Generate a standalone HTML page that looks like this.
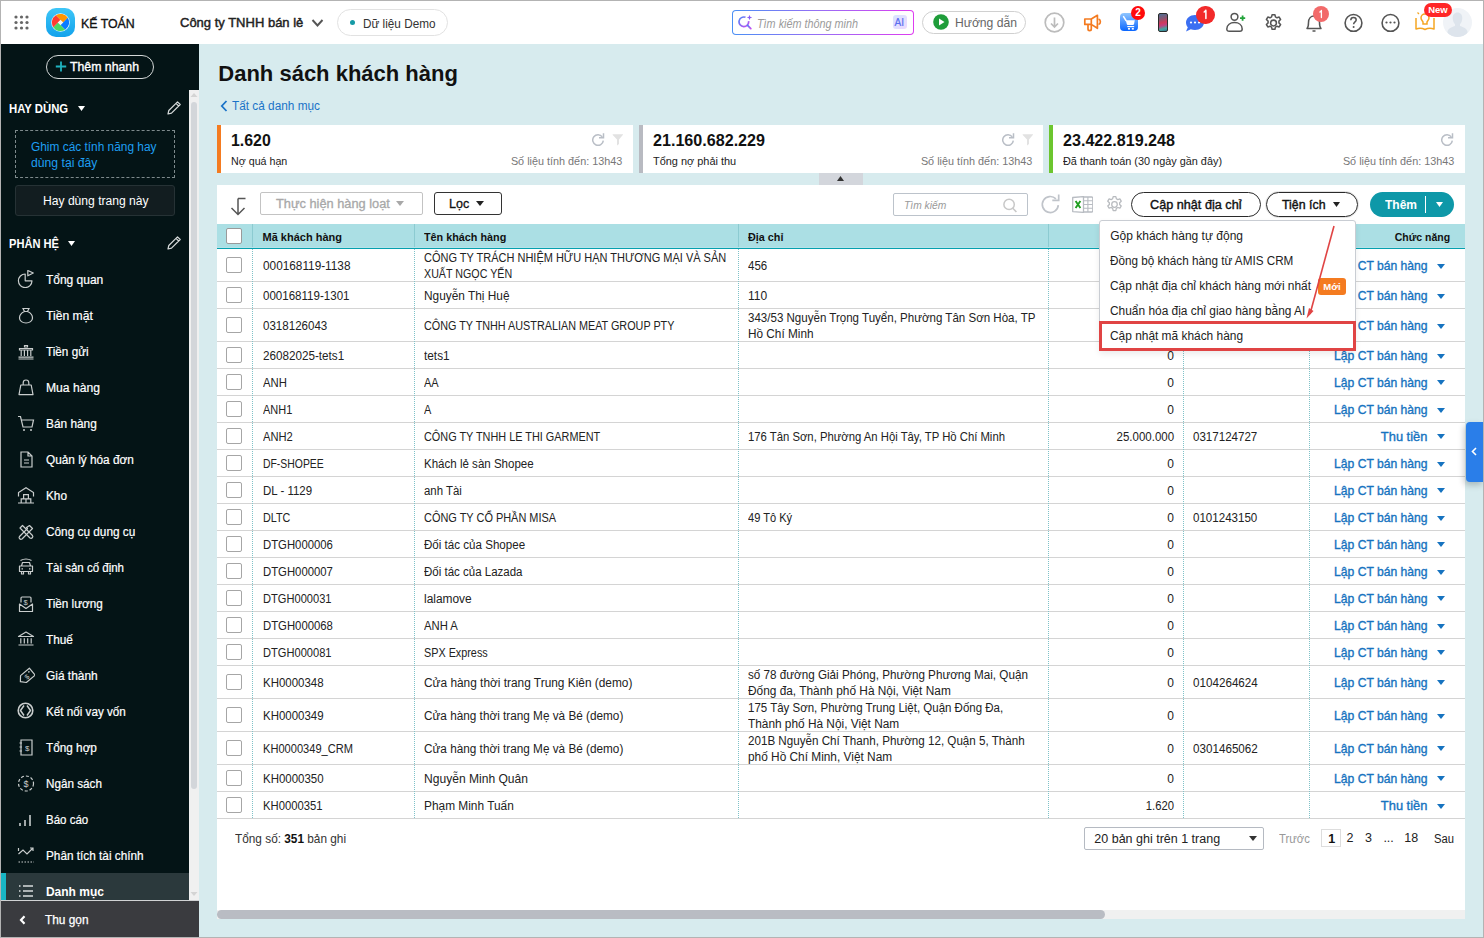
<!DOCTYPE html>
<html><head><meta charset="utf-8">
<style>
*{box-sizing:border-box;margin:0;padding:0}
html,body{width:1484px;height:938px;overflow:hidden;background:#fff}
body{font-family:"Liberation Sans",sans-serif;color:#1f1f1f;position:relative}
.abs{position:absolute}
.t{position:absolute;white-space:nowrap}
</style></head>
<body>
<div class="abs" style="left:0px;top:0px;width:1484px;height:44px;background:#fff"></div>
<svg class="abs" style="left:14px;top:15px" width="16" height="15" viewBox="0 0 16 15"><g fill="#666"><circle cx="2" cy="2" r="1.6"/><circle cx="7.5" cy="2" r="1.6"/><circle cx="13" cy="2" r="1.6"/><circle cx="2" cy="7.5" r="1.6"/><circle cx="7.5" cy="7.5" r="1.6"/><circle cx="13" cy="7.5" r="1.6"/><circle cx="2" cy="13" r="1.6"/><circle cx="7.5" cy="13" r="1.6"/><circle cx="13" cy="13" r="1.6"/></g></svg>
<div class="abs" style="left:46px;top:8px;width:29px;height:29px;border-radius:10px;background:linear-gradient(180deg,#3ec6f7,#12a2ec)"></div>
<svg class="abs" style="left:51px;top:13px" width="19" height="19" viewBox="0 0 19 19"><circle cx="9.5" cy="9.5" r="9.3" fill="#e8f6fd"/><path d="M4.859 2.259 A8.6 8.6 0 0 1 16.741 4.859 L12.1 9.5 L9.5 6.9 Z" fill="#ff9500"/><path d="M16.741 4.859 A8.6 8.6 0 0 1 14.141 16.741 L9.5 12.1 L12.1 9.5 Z" fill="#0a7bff"/><path d="M14.141 16.741 A8.6 8.6 0 0 1 2.259 14.141 L6.9 9.5 L9.5 12.1 Z" fill="#4cd964"/><path d="M2.259 14.141 A8.6 8.6 0 0 1 4.859 2.259 L9.5 6.9 L6.9 9.5 Z" fill="#ff3b30"/><path d="M9.5 6.9 L12.1 9.5 L9.5 12.1 L6.9 9.5Z" fill="#f2f4f7"/></svg>
<div class="t" style="left:81px;top:18.02px;font-size:12.5px;line-height:12.5px;color:#111;-webkit-text-stroke:0.35px #111;transform:scaleX(0.9882);transform-origin:left 50%">KẾ TOÁN</div>
<div class="t" style="left:180px;top:16.00px;font-size:13px;line-height:13px;color:#222;-webkit-text-stroke:0.45px #222">Công ty TNHH bán lẻ</div>
<svg class="abs" style="left:311px;top:18px" width="13" height="10" viewBox="0 0 13 10"><path d="M1.5 2 L6.5 7.5 L11.5 2" stroke="#555" stroke-width="1.9" fill="none"/></svg>
<div class="abs" style="left:337px;top:9px;width:111px;height:27px;border:1px solid #e2e2e2;border-radius:14px"></div>
<div class="abs" style="left:350px;top:20px;width:5px;height:5px;border-radius:50%;background:#159aa6"></div>
<div class="t" style="left:363px;top:17.84px;font-size:12px;line-height:12px;color:#333;transform:scaleX(0.9790);transform-origin:left 50%">Dữ liệu Demo</div>
<div class="abs" style="left:732px;top:10px;width:182px;height:25px;border-radius:4px;padding:1px;background:linear-gradient(90deg,#4a90f5,#9b6cf5,#de3cf0)"><div style="width:100%;height:100%;background:#fff;border-radius:3px"></div></div>
<svg class="abs" style="left:738px;top:14px" width="15" height="16" viewBox="0 0 15 16"><defs><linearGradient id="sg" x1="0" y1="0" x2="1" y2="1"><stop offset="0" stop-color="#4f86f7"/><stop offset="1" stop-color="#c74ff0"/></linearGradient></defs><path d="M10.6 7.2 A4.8 4.8 0 1 1 7.5 3.3" stroke="url(#sg)" stroke-width="1.7" fill="none"/><path d="M9.6 11.3 L12.8 14.6" stroke="url(#sg)" stroke-width="1.8" stroke-linecap="round"/><path d="M11.5 0.8 L12.2 2.8 L14.2 3.5 L12.2 4.2 L11.5 6.2 L10.8 4.2 L8.8 3.5 L10.8 2.8Z" fill="#8a5cf5"/></svg>
<div class="t" style="left:757px;top:17.54px;font-size:12px;line-height:12px;color:#9a9a9a;font-style:italic;transform:scaleX(0.9015);transform-origin:left 50%">Tìm kiếm thông minh</div>
<div class="abs" style="left:893px;top:15px;width:14px;height:14px;border-radius:3px;background:linear-gradient(135deg,#d9e6ff,#ecd9ff)"></div>
<div class="t" style="left:894.5px;top:17.54px;font-size:10px;line-height:10px;color:#5b6ef0;-webkit-text-stroke:0.2px #5b6ef0">AI</div>
<div class="abs" style="left:922px;top:11px;width:104px;height:23px;border:1px solid #d0d0d0;border-radius:12px"></div>
<svg class="abs" style="left:933px;top:14px" width="16" height="16" viewBox="0 0 16 16"><circle cx="8" cy="8" r="7.8" fill="#1f9d3a"/><path d="M6 4.5 L11.5 8 L6 11.5Z" fill="#fff"/></svg>
<div class="t" style="left:955px;top:15.90px;font-size:13px;line-height:13px;color:#666;transform:scaleX(0.9341);transform-origin:left 50%">Hướng dẫn</div>
<svg class="abs" style="left:1044px;top:12px" width="21" height="21" viewBox="0 0 21 21"><circle cx="10.5" cy="10.5" r="9.3" stroke="#bcbcbc" stroke-width="1.7" fill="none"/><path d="M10.5 5.5 V15 M7 11.5 L10.5 15 L14 11.5" stroke="#bcbcbc" stroke-width="1.7" fill="none"/></svg>
<svg class="abs" style="left:1080px;top:10px" width="26" height="25" viewBox="0 0 26 25"><path d="M4.8 9 H11.3 L17.4 5.3 V18.3 L11.3 14.4 H4.8Z M11.3 9 V14.4 M8 14.6 V19 A1.65 1.65 0 0 0 11.3 19 V14.6 M18.6 9.2 A2.2 2.7 0 0 1 18.6 14.5" stroke="#f47b20" stroke-width="1.7" fill="none" stroke-linejoin="round"/></svg>
<div class="abs" style="left:1120px;top:13px;width:18px;height:18px;border-radius:4px;background:linear-gradient(180deg,#90c6ff,#0a66ff)"></div>
<svg class="abs" style="left:1120px;top:13px" width="18" height="18" viewBox="0 0 18 18"><path d="M3.6 3.6 L6 7.5" stroke="#fff" stroke-width="1.5" stroke-linecap="round"/><path d="M5.8 7.3 H14.8 L14 11.2 Q13.6 12 12.8 12 H7.8 Q7 12 6.8 11.3Z" fill="#fff"/><path d="M7.3 13.6 H14.2" stroke="#fff" stroke-width="1.2"/><rect x="8" y="15" width="2" height="1.6" fill="#fff"/><rect x="11.8" y="15" width="2" height="1.6" fill="#fff"/></svg>
<div class="abs" style="left:1131px;top:6px;width:14px;height:14px;border-radius:50%;background:#ff0a0a;color:#fff;font-size:10px;font-weight:bold;text-align:center;line-height:14px">2</div>
<div class="abs" style="left:1158px;top:13px;width:10px;height:19px;border-radius:2px;background:linear-gradient(165deg,#4a6f95 0%,#8a5570 30%,#d03a5a 50%,#c04080 65%,#40a8a0 85%,#3a7090 100%);border:1px solid #2a2a2a"></div>
<svg class="abs" style="left:1185px;top:14px" width="20" height="18" viewBox="0 0 20 18"><path d="M10 1 C15 1 19 4.5 19 8.5 C19 12.5 15 16 10 16 C8.5 16 7 15.7 5.8 15.2 L1 17.5 L2.8 13.2 C1.6 11.9 1 10.3 1 8.5 C1 4.5 5 1 10 1Z" fill="#3b6ff2"/><circle cx="6" cy="8.5" r="1.1" fill="#fff"/><circle cx="10" cy="8.5" r="1.1" fill="#fff"/><circle cx="14" cy="8.5" r="1.1" fill="#fff"/></svg>
<div class="abs" style="left:1196px;top:5.5px;width:19px;height:18px;border-radius:9px;background:#f22a2a"></div>
<svg class="abs" style="left:1196px;top:5px" width="19" height="19" viewBox="0 0 19 19"><path d="M9.9 5.2 V13.5 M9.9 5.4 L8.2 7" stroke="#fff" stroke-width="1.5" fill="none" stroke-linecap="round"/></svg>
<svg class="abs" style="left:1225px;top:12px" width="22" height="21" viewBox="0 0 22 21"><circle cx="9.5" cy="4.8" r="3.4" stroke="#555" stroke-width="1.5" fill="none"/><path d="M1.8 17 C1.8 12.8 5.2 10.6 9.5 10.6 C13.8 10.6 17.2 12.8 17.2 17 C17.2 18.6 16.2 19.3 14.8 19.3 H4.2 C2.8 19.3 1.8 18.6 1.8 17Z" stroke="#555" stroke-width="1.5" fill="none"/><path d="M17.6 3.5 V8.7 M15 6.1 H20.2" stroke="#22a33a" stroke-width="1.8"/></svg>
<svg class="abs" style="left:1263px;top:13px" width="21" height="20" viewBox="0 0 24 24"><path d="M12 8.5a3.5 3.5 0 1 0 0 7a3.5 3.5 0 1 0 0-7z" stroke="#555" stroke-width="1.9" fill="none"/><path d="M10.3 2h3.4l.6 2.7 1.9 1.1 2.6-.9 1.7 2.9-2 1.9v2.2l2 1.9-1.7 2.9-2.6-.9-1.9 1.1-.6 2.7h-3.4l-.6-2.7-1.9-1.1-2.6.9-1.7-2.9 2-1.9v-2.2l-2-1.9 1.7-2.9 2.6.9 1.9-1.1z" stroke="#555" stroke-width="1.8" fill="none" stroke-linejoin="round"/></svg>
<svg class="abs" style="left:1304px;top:13px" width="20" height="20" viewBox="0 0 20 20"><path d="M3 15.5 C4.5 14 4.5 12.5 4.5 9.5 C4.5 5.5 7 3 10 3 C13 3 15.5 5.5 15.5 9.5 C15.5 12.5 15.5 14 17 15.5Z" stroke="#555" stroke-width="1.5" fill="none" stroke-linejoin="round"/><path d="M8.5 18 H11.5" stroke="#555" stroke-width="1.5"/></svg>
<div class="abs" style="left:1313px;top:6px;width:16px;height:16px;border-radius:50%;background:#f26a6a"></div>
<svg class="abs" style="left:1313px;top:6px" width="16" height="16" viewBox="0 0 16 16"><path d="M8.4 4.5 V11.5 M8.4 4.7 L6.9 6.1" stroke="#fff" stroke-width="1.3" fill="none" stroke-linecap="round"/></svg>
<svg class="abs" style="left:1343px;top:12px" width="21" height="21" viewBox="0 0 21 21"><circle cx="10.5" cy="10.9" r="8.4" stroke="#555" stroke-width="1.6" fill="none"/><path d="M7.8 8.2 C7.8 6.5 9 5.6 10.5 5.6 C12 5.6 13.2 6.6 13.2 8 C13.2 9.8 10.6 10 10.6 12.2" stroke="#555" stroke-width="1.5" fill="none"/><circle cx="10.6" cy="15" r="1" fill="#555"/></svg>
<svg class="abs" style="left:1380px;top:12px" width="21" height="21" viewBox="0 0 21 21"><circle cx="10.5" cy="10.9" r="8.4" stroke="#555" stroke-width="1.6" fill="none"/><circle cx="6.5" cy="10.5" r="1.1" fill="#555"/><circle cx="10.5" cy="10.5" r="1.1" fill="#555"/><circle cx="14.5" cy="10.5" r="1.1" fill="#555"/></svg>
<svg class="abs" style="left:1415px;top:11px" width="20" height="20" viewBox="0 0 20 20"><path d="M1 7 V18 C4 17 7 17 10 18.5 C13 17 16 17 19 18 V7" stroke="#f5a623" stroke-width="1.5" fill="none" stroke-linejoin="round"/><path d="M10 3 C7.5 3 6 5 6 7 C6 8.8 7.5 9.8 8 11 V13 H12 V11 C12.5 9.8 14 8.8 14 7 C14 5 12.5 3 10 3Z" stroke="#f5a623" stroke-width="1.5" fill="none"/><path d="M2.5 1.5 L4 3" stroke="#f5a623" stroke-width="1.3"/></svg>
<div class="abs" style="left:1443px;top:8px;width:29px;height:29px;border-radius:50%;background:#f0f3f7;overflow:hidden"><svg width="29" height="29" viewBox="0 0 29 29"><path d="M14.5 4.5 C17.5 4.5 19.3 6.8 19.3 10 C19.3 13 18 15.3 17 16.3 V18 C21.5 19.3 24.5 21.5 24.5 24 C24.5 27.5 20 29 14.5 29 C9 29 4.5 27.5 4.5 24 C4.5 21.5 7.5 19.3 12 18 V16.3 C11 15.3 9.7 13 9.7 10 C9.7 6.8 11.5 4.5 14.5 4.5Z" fill="#dde4ec"/></svg></div>
<div class="abs" style="left:1424px;top:3px;width:28px;height:14px;border-radius:7px;background:#ff2626;color:#fff;font-size:9.5px;font-weight:bold;text-align:center;line-height:14px">New</div>
<div class="abs" style="left:0px;top:44px;width:199px;height:894px;background:#041416"></div>
<div class="abs" style="left:46px;top:55px;width:108px;height:24px;border:1px solid #d4d8d8;border-radius:12px"></div>
<svg class="abs" style="left:55px;top:61px" width="12" height="11" viewBox="0 0 12 11"><path d="M6 0.5 V10.5 M0.8 5.5 H11.2" stroke="#1fb2bf" stroke-width="1.8"/></svg>
<div class="t" style="left:70.4px;top:61.24px;font-size:12px;line-height:12px;color:#fff;-webkit-text-stroke:0.35px #fff;transform:scaleX(1.0241);transform-origin:left 50%">Thêm nhanh</div>
<div class="abs" style="left:189px;top:90px;width:10px;height:810px;background:#f0f0f0"></div>
<div class="abs" style="left:191px;top:102px;width:6px;height:687px;background:#d3d6da;border-radius:3px"></div>
<svg class="abs" style="left:190px;top:92px" width="8" height="6" viewBox="0 0 8 6"><path d="M0.5 5 L4 1 L7.5 5Z" fill="#d4d4d4"/></svg>
<svg class="abs" style="left:190px;top:891px" width="8" height="6" viewBox="0 0 8 6"><path d="M0.5 1 L4 5 L7.5 1Z" fill="#d4d4d4"/></svg>
<div class="t" style="left:8.7px;top:102.54px;font-size:12px;line-height:12px;color:#fff;font-weight:bold;transform:scaleX(0.9428);transform-origin:left 50%">HAY DÙNG</div>
<svg class="abs" style="left:78px;top:106px" width="7" height="5" viewBox="0 0 7 5"><path d="M0 0 H7 L3.5 5Z" fill="#fff"/></svg>
<svg class="abs" style="left:166px;top:100px" width="16" height="16" viewBox="0 0 16 16"><path d="M2 14 L2.8 10.5 L11.5 1.8 L14.2 4.5 L5.5 13.2Z M10 3.3 L12.7 6" stroke="#d8dcdc" stroke-width="1.2" fill="none" stroke-linejoin="round"/></svg>
<div class="abs" style="left:15px;top:130px;width:160px;height:48px;border:1px dashed #7e8a8c"></div>
<div class="t" style="left:30.5px;top:140.92px;font-size:12.5px;line-height:12.5px;color:#1e9ff2;transform:scaleX(0.9506);transform-origin:left 50%">Ghim các tính năng hay</div>
<div class="t" style="left:30.5px;top:156.62px;font-size:12.5px;line-height:12.5px;color:#1e9ff2;transform:scaleX(0.9749);transform-origin:left 50%">dùng tại đây</div>
<div class="abs" style="left:15px;top:185px;width:160px;height:31px;background:#121d20;border:1px solid #263235;border-radius:3px"></div>
<div class="t" style="left:42.7px;top:195.42px;font-size:12.5px;line-height:12.5px;color:#fff;transform:scaleX(0.9679);transform-origin:left 50%">Hay dùng trang này</div>
<div class="t" style="left:8.7px;top:237.54px;font-size:12px;line-height:12px;color:#fff;font-weight:bold;transform:scaleX(0.9258);transform-origin:left 50%">PHÂN HỆ</div>
<svg class="abs" style="left:68px;top:241px" width="7" height="5" viewBox="0 0 7 5"><path d="M0 0 H7 L3.5 5Z" fill="#fff"/></svg>
<svg class="abs" style="left:166px;top:235px" width="16" height="16" viewBox="0 0 16 16"><path d="M2 14 L2.8 10.5 L11.5 1.8 L14.2 4.5 L5.5 13.2Z M10 3.3 L12.7 6" stroke="#d8dcdc" stroke-width="1.2" fill="none" stroke-linejoin="round"/></svg>
<svg class="abs" style="left:17px;top:270px" width="18" height="18" viewBox="0 0 18 18"><path d="M8.2 4 A6.8 6.8 0 1 0 15 10.8 H8.2Z" stroke="#c9cdcd" stroke-width="1.2" fill="none" stroke-linejoin="round"/><path d="M10.8 0.5 V5.8 L16.3 3Z" stroke="#c9cdcd" stroke-width="1.2" fill="none" stroke-linejoin="round"/></svg>
<div class="t" style="left:45.9px;top:273.94px;font-size:12px;line-height:12px;color:#fff;-webkit-text-stroke:0.2px #fff">Tổng quan</div>
<svg class="abs" style="left:17px;top:306px" width="18" height="18" viewBox="0 0 18 18"><path d="M6 2.5 H12 L10.5 5.5 C14 7 15.5 9.5 15.5 12 C15.5 15 12.5 17 9 17 C5.5 17 2.5 15 2.5 12 C2.5 9.5 4 7 7.5 5.5Z M7.5 5.5 H10.5" stroke="#c9cdcd" stroke-width="1.2" fill="none"/></svg>
<div class="t" style="left:45.9px;top:309.94px;font-size:12px;line-height:12px;color:#fff;-webkit-text-stroke:0.2px #fff;transform:scaleX(1.0122);transform-origin:left 50%">Tiền mặt</div>
<svg class="abs" style="left:17px;top:342px" width="18" height="18" viewBox="0 0 18 18"><path d="M7.5 3.5 H10.5 V5 H7.5Z M2.5 6.5 H15.5 V8 H2.5Z M4.2 8.5 V14 M7.4 8.5 V14 M10.6 8.5 V14 M13.8 8.5 V14 M1.5 15.2 H16.5 M1.5 17 H16.5" stroke="#c9cdcd" stroke-width="1.2" fill="none"/></svg>
<div class="t" style="left:45.9px;top:345.94px;font-size:12px;line-height:12px;color:#fff;-webkit-text-stroke:0.2px #fff;transform:scaleX(0.9769);transform-origin:left 50%">Tiền gửi</div>
<svg class="abs" style="left:17px;top:378px" width="18" height="18" viewBox="0 0 18 18"><path d="M6.2 7 V4.8 A2.8 2.8 0 0 1 11.8 4.8 V7 M3.8 7 H14.2 L16 16.6 H2Z" stroke="#c9cdcd" stroke-width="1.2" fill="none" stroke-linejoin="round"/></svg>
<div class="t" style="left:45.9px;top:381.94px;font-size:12px;line-height:12px;color:#fff;-webkit-text-stroke:0.2px #fff;transform:scaleX(1.0099);transform-origin:left 50%">Mua hàng</div>
<svg class="abs" style="left:17px;top:414px" width="18" height="18" viewBox="0 0 18 18"><path d="M1 2.5 H3.5 L6 13 H15 L16.5 6 H4.5" stroke="#c9cdcd" stroke-width="1.2" fill="none"/><circle cx="7" cy="16" r="1" fill="#c9cdcd"/><circle cx="14" cy="16" r="1" fill="#c9cdcd"/></svg>
<div class="t" style="left:45.9px;top:417.94px;font-size:12px;line-height:12px;color:#fff;-webkit-text-stroke:0.2px #fff;transform:scaleX(0.9887);transform-origin:left 50%">Bán hàng</div>
<svg class="abs" style="left:17px;top:450px" width="18" height="18" viewBox="0 0 18 18"><path d="M4 2 H11 L15 6 V17 H4Z M11 2 V6 H15 M7 10 H12 M7 13 H12" stroke="#c9cdcd" stroke-width="1.2" fill="none"/></svg>
<div class="t" style="left:45.9px;top:453.94px;font-size:12px;line-height:12px;color:#fff;-webkit-text-stroke:0.2px #fff;transform:scaleX(0.9836);transform-origin:left 50%">Quản lý hóa đơn</div>
<svg class="abs" style="left:17px;top:486px" width="18" height="18" viewBox="0 0 18 18"><path d="M1.5 10.5 V6.5 L9 1.8 L16.5 6.5 V10.5 M1 17 H17 M6.6 8.6 H11.4 V12.8 H6.6Z M4.2 12.8 H9 V17 H4.2Z M9 12.8 H13.8 V17 H9Z" stroke="#c9cdcd" stroke-width="1.2" fill="none"/></svg>
<div class="t" style="left:45.9px;top:489.94px;font-size:12px;line-height:12px;color:#fff;-webkit-text-stroke:0.2px #fff;transform:scaleX(0.9835);transform-origin:left 50%">Kho</div>
<svg class="abs" style="left:17px;top:522px" width="18" height="18" viewBox="0 0 18 18"><path d="M3 6 L5.5 3.5 L15.5 13.5 A1.8 1.8 0 0 1 13 16 Z" stroke="#c9cdcd" stroke-width="1.2" fill="none" stroke-linejoin="round"/><path d="M12.5 3.5 L15.5 6.5 L5 17 A1.8 1.8 0 0 1 2.5 14.5 L10.5 6.5 L9.5 5.5 L12.5 3.5Z" stroke="#c9cdcd" stroke-width="1.2" fill="none" stroke-linejoin="round"/></svg>
<div class="t" style="left:45.9px;top:525.94px;font-size:12px;line-height:12px;color:#fff;-webkit-text-stroke:0.2px #fff;transform:scaleX(0.9842);transform-origin:left 50%">Công cụ dụng cụ</div>
<svg class="abs" style="left:17px;top:558px" width="18" height="18" viewBox="0 0 18 18"><path d="M3.5 2.5 Q9 -0.5 14.5 2.5 M4.5 8 L5.5 4.5 H12.5 L13.5 8 M2.5 8 H15.5 V13.5 H2.5Z M4.5 13.5 V16 H6.5 V13.5 M11.5 13.5 V16 H13.5 V13.5 M4.5 10.8 H6 M12 10.8 H13.5" stroke="#c9cdcd" stroke-width="1.2" fill="none" stroke-linejoin="round"/></svg>
<div class="t" style="left:45.9px;top:561.94px;font-size:12px;line-height:12px;color:#fff;-webkit-text-stroke:0.2px #fff;transform:scaleX(0.9585);transform-origin:left 50%">Tài sản cố định</div>
<svg class="abs" style="left:17px;top:594px" width="18" height="18" viewBox="0 0 18 18"><path d="M4 8.5 V4 Q4 3 5 3 H13 Q14 3 14 4 V8.5 M2.5 10 L9 14.5 L15.5 10 V17.5 H2.5Z" stroke="#c9cdcd" stroke-width="1.2" fill="none" stroke-linejoin="round"/><text x="6.6" y="10.5" font-size="7.5" fill="#c9cdcd" font-family="Liberation Sans">$</text></svg>
<div class="t" style="left:45.9px;top:597.94px;font-size:12px;line-height:12px;color:#fff;-webkit-text-stroke:0.2px #fff;transform:scaleX(0.9768);transform-origin:left 50%">Tiền lương</div>
<svg class="abs" style="left:17px;top:630px" width="18" height="18" viewBox="0 0 18 18"><path d="M1.5 6.5 L9 2 L16.5 6.5Z M3.8 8.2 V13.5 M7.3 8.2 V13.5 M10.7 8.2 V13.5 M14.2 8.2 V13.5 M1.5 15 H16.5" stroke="#c9cdcd" stroke-width="1.2" fill="none" stroke-linejoin="round"/></svg>
<div class="t" style="left:45.9px;top:633.94px;font-size:12px;line-height:12px;color:#fff;-webkit-text-stroke:0.2px #fff;transform:scaleX(0.9835);transform-origin:left 50%">Thuế</div>
<svg class="abs" style="left:17px;top:666px" width="18" height="18" viewBox="0 0 18 18"><g transform="translate(9.5 10.5) rotate(-40) translate(-8 -4.5)"><path d="M0 4.5 L4 0 H15.5 V9 H4Z" stroke="#c9cdcd" stroke-width="1.2" fill="none" stroke-linejoin="round"/><circle cx="12.8" cy="2.5" r="0.8" fill="#c9cdcd"/><text x="6" y="7.5" font-size="7" fill="#c9cdcd" font-family="Liberation Sans">$</text></g></svg>
<div class="t" style="left:45.9px;top:669.94px;font-size:12px;line-height:12px;color:#fff;-webkit-text-stroke:0.2px #fff;transform:scaleX(0.9935);transform-origin:left 50%">Giá thành</div>
<svg class="abs" style="left:17px;top:702px" width="18" height="18" viewBox="0 0 18 18"><circle cx="8.5" cy="8.5" r="7.3" stroke="#c9cdcd" stroke-width="1.6" fill="none"/><path d="M7 3.5 L3.5 8.5 L7 13.5 M10 3.5 L13.5 8.5 L10 13.5" stroke="#c9cdcd" stroke-width="1.5" fill="none"/></svg>
<div class="t" style="left:45.9px;top:705.94px;font-size:12px;line-height:12px;color:#fff;-webkit-text-stroke:0.2px #fff;transform:scaleX(0.9726);transform-origin:left 50%">Kết nối vay vốn</div>
<svg class="abs" style="left:17px;top:738px" width="18" height="18" viewBox="0 0 18 18"><path d="M4 2 H15 V17 H4Z M2.5 5 H5 M2.5 9 H5 M2.5 13 H5" stroke="#c9cdcd" stroke-width="1.2" fill="none"/><text x="8" y="12.5" font-size="8" fill="#c9cdcd" font-family="Liberation Sans">$</text></svg>
<div class="t" style="left:45.9px;top:741.94px;font-size:12px;line-height:12px;color:#fff;-webkit-text-stroke:0.2px #fff;transform:scaleX(0.9807);transform-origin:left 50%">Tổng hợp</div>
<svg class="abs" style="left:17px;top:774px" width="18" height="18" viewBox="0 0 18 18"><circle cx="9" cy="9.5" r="7.5" stroke="#c9cdcd" stroke-width="1.2" fill="none" stroke-dasharray="3 2"/><text x="6.5" y="13" font-size="9" fill="#c9cdcd" font-family="Liberation Sans">$</text></svg>
<div class="t" style="left:45.9px;top:777.94px;font-size:12px;line-height:12px;color:#fff;-webkit-text-stroke:0.2px #fff;transform:scaleX(0.9744);transform-origin:left 50%">Ngân sách</div>
<svg class="abs" style="left:17px;top:810px" width="18" height="18" viewBox="0 0 18 18"><path d="M3 13 V16 M8 10 V16 M13 5 V16" stroke="#c9cdcd" stroke-width="1.6" fill="none"/></svg>
<div class="t" style="left:45.9px;top:813.94px;font-size:12px;line-height:12px;color:#fff;-webkit-text-stroke:0.2px #fff;transform:scaleX(0.9584);transform-origin:left 50%">Báo cáo</div>
<svg class="abs" style="left:17px;top:846px" width="18" height="18" viewBox="0 0 18 18"><path d="M1.5 2 V5 M1.5 8 L6 4 L10 8 L16 2 M13 2 H16 V5" stroke="#c9cdcd" stroke-width="1.2" fill="none"/><path d="M1.5 16 H17" stroke="#c9cdcd" stroke-width="1.2" stroke-dasharray="1.5 1.5"/></svg>
<div class="t" style="left:45.9px;top:849.94px;font-size:12px;line-height:12px;color:#fff;-webkit-text-stroke:0.2px #fff;transform:scaleX(0.9819);transform-origin:left 50%">Phân tích tài chính</div>
<div class="abs" style="left:1px;top:873px;width:188px;height:27px;background:#2b393c"></div>
<div class="abs" style="left:1px;top:873px;width:5px;height:27px;background:#19b5c4"></div>
<svg class="abs" style="left:17px;top:882px" width="18" height="18" viewBox="0 0 18 18"><path d="M6 4 H16 M6 9 H16 M6 14 H16" stroke="#d9dddd" stroke-width="1.3"/><path d="M2 4 H3.5 M2 9 H3.5 M2 14 H3.5" stroke="#d9dddd" stroke-width="1.3"/></svg>
<div class="t" style="left:45.9px;top:885.94px;font-size:12px;line-height:12px;color:#fff;font-weight:bold">Danh mục</div>
<div class="abs" style="left:1px;top:900px;width:198px;height:1px;background:#d0d2d4"></div>
<div class="abs" style="left:1px;top:901px;width:198px;height:36px;background:#3a3b3f"></div>
<svg class="abs" style="left:19px;top:915px" width="7" height="10" viewBox="0 0 7 10"><path d="M5.5 1.2 L2 5 L5.5 8.8" stroke="#fff" stroke-width="2.2" fill="none"/></svg>
<div class="t" style="left:44.6px;top:914.34px;font-size:12px;line-height:12px;color:#fff;-webkit-text-stroke:0.25px #fff;transform:scaleX(0.9879);transform-origin:left 50%">Thu gọn</div>
<div class="abs" style="left:199px;top:44px;width:1285px;height:894px;background:#d7ebee"></div>
<div class="t" style="left:218.3px;top:63.38px;font-size:22px;line-height:22px;color:#111;font-weight:bold">Danh sách khách hàng</div>
<svg class="abs" style="left:220px;top:100px" width="8" height="12" viewBox="0 0 8 12"><path d="M6.5 1 L1.8 6 L6.5 11" stroke="#1a73c8" stroke-width="1.8" fill="none"/></svg>
<div class="t" style="left:231.7px;top:100.02px;font-size:12.5px;line-height:12.5px;color:#1a73c8;transform:scaleX(0.9452);transform-origin:left 50%">Tất cả danh mục</div>
<div class="abs" style="left:217px;top:125px;width:416px;height:48px;background:#fff;border-left:4px solid #f47b20"></div>
<div class="t" style="left:230.6px;top:133.36px;font-size:16px;line-height:16px;color:#111;font-weight:bold;transform:scaleX(0.9915);transform-origin:left 50%">1.620</div>
<div class="t" style="left:230.6px;top:156.27px;font-size:11.5px;line-height:11.5px;color:#222;transform:scaleX(0.9289);transform-origin:left 50%">Nợ quá hạn</div>
<div class="t" style="left:503.91px;top:155.87px;font-size:11.5px;line-height:11.5px;color:#777;transform:scaleX(0.9417);transform-origin:right 50%">Số liệu tính đến: 13h43</div>
<svg class="abs" style="left:592px;top:133px" width="14" height="15" viewBox="0 0 14 15"><path d="M10.3 3.9 A5.3 5.3 0 1 0 11.3 7.6" stroke="#b9bec6" stroke-width="1.5" fill="none"/><path d="M11.5 0.3 V4.8 H7" stroke="#b9bec6" stroke-width="1.5" fill="none"/></svg>
<svg class="abs" style="left:612px;top:134px" width="12" height="12" viewBox="0 0 12 12"><path d="M0.5 0.8 Q0.5 0.3 1 0.3 H10.8 Q11.3 0.3 11 0.8 L7 5.5 V10 L5 11.5 V5.5Z" fill="#e2e2e2"/></svg>
<div class="abs" style="left:639px;top:125px;width:404px;height:48px;background:#fff;border-left:4px solid #b8bac1"></div>
<div class="t" style="left:652.6px;top:133.36px;font-size:16px;line-height:16px;color:#111;font-weight:bold;transform:scaleX(1.0070);transform-origin:left 50%">21.160.682.229</div>
<div class="t" style="left:652.6px;top:156.27px;font-size:11.5px;line-height:11.5px;color:#222;transform:scaleX(0.9513);transform-origin:left 50%">Tổng nợ phải thu</div>
<div class="t" style="left:913.91px;top:155.87px;font-size:11.5px;line-height:11.5px;color:#777;transform:scaleX(0.9417);transform-origin:right 50%">Số liệu tính đến: 13h43</div>
<svg class="abs" style="left:1002px;top:133px" width="14" height="15" viewBox="0 0 14 15"><path d="M10.3 3.9 A5.3 5.3 0 1 0 11.3 7.6" stroke="#b9bec6" stroke-width="1.5" fill="none"/><path d="M11.5 0.3 V4.8 H7" stroke="#b9bec6" stroke-width="1.5" fill="none"/></svg>
<svg class="abs" style="left:1022px;top:134px" width="12" height="12" viewBox="0 0 12 12"><path d="M0.5 0.8 Q0.5 0.3 1 0.3 H10.8 Q11.3 0.3 11 0.8 L7 5.5 V10 L5 11.5 V5.5Z" fill="#e2e2e2"/></svg>
<div class="abs" style="left:1049px;top:125px;width:416px;height:48px;background:#fff;border-left:4px solid #6cc62f"></div>
<div class="t" style="left:1062.6px;top:133.36px;font-size:16px;line-height:16px;color:#111;font-weight:bold;transform:scaleX(1.0070);transform-origin:left 50%">23.422.819.248</div>
<div class="t" style="left:1062.6px;top:156.27px;font-size:11.5px;line-height:11.5px;color:#222;transform:scaleX(0.9456);transform-origin:left 50%">Đã thanh toán (30 ngày gần đây)</div>
<div class="t" style="left:1335.91px;top:155.87px;font-size:11.5px;line-height:11.5px;color:#777;transform:scaleX(0.9417);transform-origin:right 50%">Số liệu tính đến: 13h43</div>
<svg class="abs" style="left:1441px;top:133px" width="14" height="15" viewBox="0 0 14 15"><path d="M10.3 3.9 A5.3 5.3 0 1 0 11.3 7.6" stroke="#b9bec6" stroke-width="1.5" fill="none"/><path d="M11.5 0.3 V4.8 H7" stroke="#b9bec6" stroke-width="1.5" fill="none"/></svg>
<div class="abs" style="left:819px;top:173px;width:44px;height:12px;background:#d3d6dc"></div>
<svg class="abs" style="left:837px;top:176px" width="7" height="5" viewBox="0 0 7 5"><path d="M0 5 H7 L3.5 0Z" fill="#333"/></svg>
<div class="abs" style="left:217px;top:185px;width:1248px;height:734px;background:#fff"></div>
<div class="abs" style="left:217px;top:910px;width:1248px;height:9px;background:#f0f0f0"></div>
<div class="abs" style="left:217px;top:910px;width:888px;height:9px;background:#b9bcc3;border-radius:5px"></div>
<svg class="abs" style="left:230px;top:197px" width="17" height="19" viewBox="0 0 17 19"><path d="M8 1.5 H15.5 M8 1.5 V17.5 M1.5 11 L8 17.5 L14.5 11" stroke="#555" stroke-width="1.5" fill="none"/></svg>
<div class="abs" style="left:260px;top:192px;width:163px;height:23px;border:1px solid #c3c3c3;border-radius:2px"></div>
<div class="t" style="left:276px;top:197.92px;font-size:12.5px;line-height:12.5px;color:#a8a8a8;-webkit-text-stroke:0.3px #a8a8a8;transform:scaleX(1.0241);transform-origin:left 50%">Thực hiện hàng loạt</div>
<svg class="abs" style="left:396px;top:201px" width="8" height="5" viewBox="0 0 8 5"><path d="M0 0 H8 L4 5Z" fill="#a8a8a8"/></svg>
<div class="abs" style="left:434px;top:192px;width:68px;height:23px;border:1px solid #333;border-radius:3px"></div>
<div class="t" style="left:449px;top:197.92px;font-size:12.5px;line-height:12.5px;color:#111;-webkit-text-stroke:0.3px #111">Lọc</div>
<svg class="abs" style="left:476px;top:201px" width="8" height="5" viewBox="0 0 8 5"><path d="M0 0 H8 L4 5Z" fill="#222"/></svg>
<div class="abs" style="left:893px;top:193px;width:135px;height:23px;border:1px solid #bcc3cb;border-radius:2px"></div>
<div class="t" style="left:903.8px;top:199.77px;font-size:11.5px;line-height:11.5px;color:#9a9a9a;font-style:italic;transform:scaleX(0.8948);transform-origin:left 50%">Tìm kiếm</div>
<svg class="abs" style="left:1002px;top:197px" width="17" height="17" viewBox="0 0 17 17"><circle cx="7.1" cy="7.4" r="5.2" stroke="#c8c8c8" stroke-width="1.5" fill="none"/><path d="M10.8 11.2 L14.4 15" stroke="#c8c8c8" stroke-width="1.6"/></svg>
<svg class="abs" style="left:1040px;top:194px" width="21" height="21" viewBox="0 0 21 21"><path d="M15.9 4.8 A8 8 0 1 0 18.3 11.1" stroke="#c0c4ca" stroke-width="1.7" fill="none"/><path d="M18.7 0.4 V6.3 H12.3" stroke="#c0c4ca" stroke-width="1.7" fill="none"/></svg>
<svg class="abs" style="left:1072px;top:196px" width="21" height="17" viewBox="0 0 21 17"><rect x="11" y="1" width="9.8" height="15" rx="1.2" stroke="#b8bcc2" stroke-width="1.3" fill="#fff"/><path d="M11 4.7 H20.8 M11 8.5 H20.8 M11 12.3 H20.8 M15.9 1 V16" stroke="#b8bcc2" stroke-width="1.1"/><path d="M0.7 1.5 L11.5 0.6 V16.4 L0.7 15.6Z" stroke="#b8bcc2" stroke-width="1.3" fill="#fff" stroke-linejoin="round"/><path d="M3.6 5 L8.4 12 M8.4 5 L3.6 12" stroke="#1f9d1f" stroke-width="1.9"/></svg>
<svg class="abs" style="left:1105px;top:195px" width="19" height="19" viewBox="0 0 24 24"><path d="M12 8.5a3.5 3.5 0 1 0 0 7a3.5 3.5 0 1 0 0-7z" stroke="#b8bbbf" stroke-width="1.6" fill="none"/><path d="M10.3 2h3.4l.6 2.7 1.9 1.1 2.6-.9 1.7 2.9-2 1.9v2.2l2 1.9-1.7 2.9-2.6-.9-1.9 1.1-.6 2.7h-3.4l-.6-2.7-1.9-1.1-2.6.9-1.7-2.9 2-1.9v-2.2l-2-1.9 1.7-2.9 2.6.9 1.9-1.1z" stroke="#b8bbbf" stroke-width="1.6" fill="none" stroke-linejoin="round"/></svg>
<div class="abs" style="left:1131px;top:192px;width:130px;height:25px;border:1px solid #2a2a2a;border-radius:13px"></div>
<div class="t" style="left:1150px;top:199.02px;font-size:12.5px;line-height:12.5px;color:#111;-webkit-text-stroke:0.4px #111;transform:scaleX(1.0129);transform-origin:left 50%">Cập nhật địa chỉ</div>
<div class="abs" style="left:1265px;top:191px;width:94px;height:27px;border:1px solid #e2e2e2;border-radius:14px"></div>
<div class="abs" style="left:1266px;top:192px;width:92px;height:25px;border:1px solid #2a2a2a;border-radius:13px"></div>
<div class="t" style="left:1281.5px;top:199.02px;font-size:12.5px;line-height:12.5px;color:#111;-webkit-text-stroke:0.4px #111;transform:scaleX(0.9886);transform-origin:left 50%">Tiện ích</div>
<svg class="abs" style="left:1333px;top:202px" width="7" height="5" viewBox="0 0 7 5"><path d="M0 0 H7 L3.5 5Z" fill="#222"/></svg>
<div class="abs" style="left:1370px;top:192px;width:84px;height:25px;background:#0e98a8;border-radius:13px"></div>
<div class="t" style="left:1385.3px;top:199.02px;font-size:12.5px;line-height:12.5px;color:#fff;font-weight:bold;transform:scaleX(0.9599);transform-origin:left 50%">Thêm</div>
<div class="abs" style="left:1425px;top:196px;width:1px;height:17px;background:#fff"></div>
<svg class="abs" style="left:1436px;top:202px" width="7" height="5" viewBox="0 0 7 5"><path d="M0 0 H7 L3.5 5Z" fill="#fff"/></svg>
<div class="abs" style="left:217px;top:224px;width:1248px;height:24px;background:#abdfe4"></div>
<div class="abs" style="left:217px;top:247px;width:1248px;height:1px;background:#b6e3e8"></div>
<div class="abs" style="left:217px;top:248px;width:1248px;height:1px;background:#05a0ae"></div>
<div class="abs" style="left:252px;top:224px;width:1px;height:23px;background:#8ccbd1"></div>
<div class="abs" style="left:414px;top:224px;width:1px;height:23px;background:#8ccbd1"></div>
<div class="abs" style="left:738px;top:224px;width:1px;height:23px;background:#8ccbd1"></div>
<div class="abs" style="left:1048px;top:224px;width:1px;height:23px;background:#8ccbd1"></div>
<div class="abs" style="left:1183px;top:224px;width:1px;height:23px;background:#8ccbd1"></div>
<div class="abs" style="left:1309px;top:224px;width:1px;height:23px;background:#8ccbd1"></div>
<div class="abs" style="left:226px;top:228px;width:16px;height:16px;background:#fff;border:1px solid #9a9a9a;border-radius:2px"></div>
<div class="t" style="left:262.5px;top:231.89px;font-size:11px;line-height:11px;color:#111;font-weight:bold">Mã khách hàng</div>
<div class="t" style="left:424.2px;top:231.89px;font-size:11px;line-height:11px;color:#111;font-weight:bold;transform:scaleX(0.9829);transform-origin:left 50%">Tên khách hàng</div>
<div class="t" style="left:747.9px;top:231.89px;font-size:11px;line-height:11px;color:#111;font-weight:bold;transform:scaleX(0.9815);transform-origin:left 50%">Địa chỉ</div>
<div class="t" style="left:1392.22px;top:231.89px;font-size:11px;line-height:11px;color:#111;font-weight:bold;transform:scaleX(0.9539);transform-origin:right 50%">Chức năng</div>
<div class="abs" style="left:217px;top:281px;width:1248px;height:1px;background:#d4d4d4"></div>
<div class="abs" style="left:226px;top:257px;width:16px;height:16px;background:#fff;border:1px solid #a6a6a6;border-radius:2px"></div>
<div class="t" style="left:262.5px;top:259.64px;font-size:12px;line-height:12px;color:#222;transform:scaleX(0.9834);transform-origin:left 50%">000168119-1138</div>
<div class="t" style="left:424.3px;top:251.94px;font-size:12px;line-height:12px;color:#222;transform:scaleX(0.9160);transform-origin:left 50%">CÔNG TY TRÁCH NHIỆM HỮU HẠN THƯƠNG MẠI VÀ SẢN</div>
<div class="t" style="left:424.3px;top:267.84px;font-size:12px;line-height:12px;color:#222;transform:scaleX(0.8908);transform-origin:left 50%">XUẤT NGỌC YẾN</div>
<div class="t" style="left:748px;top:259.64px;font-size:12px;line-height:12px;color:#222;transform:scaleX(0.9590);transform-origin:left 50%">456</div>
<div class="t" style="left:1334.76px;top:259.94px;font-size:12px;line-height:12px;color:#1673c0;-webkit-text-stroke:0.35px #1673c0;transform:scaleX(1.0104);transform-origin:right 50%">Lập CT bán hàng</div>
<svg class="abs" style="left:1437px;top:264px" width="8" height="5" viewBox="0 0 8 5"><path d="M0 0 H8 L4 5Z" fill="#1673c0"/></svg>
<div class="abs" style="left:217px;top:308px;width:1248px;height:1px;background:#d4d4d4"></div>
<div class="abs" style="left:226px;top:287px;width:16px;height:16px;background:#fff;border:1px solid #a6a6a6;border-radius:2px"></div>
<div class="t" style="left:262.5px;top:289.64px;font-size:12px;line-height:12px;color:#222;transform:scaleX(0.9626);transform-origin:left 50%">000168119-1301</div>
<div class="t" style="left:424.3px;top:289.64px;font-size:12px;line-height:12px;color:#222;transform:scaleX(0.9883);transform-origin:left 50%">Nguyễn Thị Huệ</div>
<div class="t" style="left:748px;top:289.64px;font-size:12px;line-height:12px;color:#222">110</div>
<div class="t" style="left:1334.76px;top:289.94px;font-size:12px;line-height:12px;color:#1673c0;-webkit-text-stroke:0.35px #1673c0;transform:scaleX(1.0104);transform-origin:right 50%">Lập CT bán hàng</div>
<svg class="abs" style="left:1437px;top:294px" width="8" height="5" viewBox="0 0 8 5"><path d="M0 0 H8 L4 5Z" fill="#1673c0"/></svg>
<div class="abs" style="left:217px;top:341px;width:1248px;height:1px;background:#d4d4d4"></div>
<div class="abs" style="left:226px;top:317px;width:16px;height:16px;background:#fff;border:1px solid #a6a6a6;border-radius:2px"></div>
<div class="t" style="left:262.5px;top:319.64px;font-size:12px;line-height:12px;color:#222;transform:scaleX(0.9635);transform-origin:left 50%">0318126043</div>
<div class="t" style="left:424.3px;top:319.64px;font-size:12px;line-height:12px;color:#222;transform:scaleX(0.9006);transform-origin:left 50%">CÔNG TY TNHH AUSTRALIAN MEAT GROUP PTY</div>
<div class="t" style="left:748px;top:311.94px;font-size:12px;line-height:12px;color:#222;transform:scaleX(0.9619);transform-origin:left 50%">343/53 Nguyễn Trọng Tuyển, Phường Tân Sơn Hòa, TP</div>
<div class="t" style="left:748px;top:327.84px;font-size:12px;line-height:12px;color:#222;transform:scaleX(0.9821);transform-origin:left 50%">Hồ Chí Minh</div>
<div class="t" style="left:1334.76px;top:319.94px;font-size:12px;line-height:12px;color:#1673c0;-webkit-text-stroke:0.35px #1673c0;transform:scaleX(1.0104);transform-origin:right 50%">Lập CT bán hàng</div>
<svg class="abs" style="left:1437px;top:324px" width="8" height="5" viewBox="0 0 8 5"><path d="M0 0 H8 L4 5Z" fill="#1673c0"/></svg>
<div class="abs" style="left:217px;top:368px;width:1248px;height:1px;background:#d4d4d4"></div>
<div class="abs" style="left:226px;top:347px;width:16px;height:16px;background:#fff;border:1px solid #a6a6a6;border-radius:2px"></div>
<div class="t" style="left:262.5px;top:349.64px;font-size:12px;line-height:12px;color:#222;transform:scaleX(0.9736);transform-origin:left 50%">26082025-tets1</div>
<div class="t" style="left:424.3px;top:349.64px;font-size:12px;line-height:12px;color:#222;transform:scaleX(0.9840);transform-origin:left 50%">tets1</div>
<div class="t" style="left:1167.23px;top:349.64px;font-size:12px;line-height:12px;color:#222">0</div>
<div class="t" style="left:1334.76px;top:349.94px;font-size:12px;line-height:12px;color:#1673c0;-webkit-text-stroke:0.35px #1673c0;transform:scaleX(1.0104);transform-origin:right 50%">Lập CT bán hàng</div>
<svg class="abs" style="left:1437px;top:354px" width="8" height="5" viewBox="0 0 8 5"><path d="M0 0 H8 L4 5Z" fill="#1673c0"/></svg>
<div class="abs" style="left:217px;top:395px;width:1248px;height:1px;background:#d4d4d4"></div>
<div class="abs" style="left:226px;top:374px;width:16px;height:16px;background:#fff;border:1px solid #a6a6a6;border-radius:2px"></div>
<div class="t" style="left:262.5px;top:376.64px;font-size:12px;line-height:12px;color:#222;transform:scaleX(0.9433);transform-origin:left 50%">ANH</div>
<div class="t" style="left:424.3px;top:376.64px;font-size:12px;line-height:12px;color:#222;transform:scaleX(0.9183);transform-origin:left 50%">AA</div>
<div class="t" style="left:1167.23px;top:376.64px;font-size:12px;line-height:12px;color:#222">0</div>
<div class="t" style="left:1334.76px;top:376.94px;font-size:12px;line-height:12px;color:#1673c0;-webkit-text-stroke:0.35px #1673c0;transform:scaleX(1.0104);transform-origin:right 50%">Lập CT bán hàng</div>
<svg class="abs" style="left:1437px;top:380px" width="8" height="5" viewBox="0 0 8 5"><path d="M0 0 H8 L4 5Z" fill="#1673c0"/></svg>
<div class="abs" style="left:217px;top:422px;width:1248px;height:1px;background:#d4d4d4"></div>
<div class="abs" style="left:226px;top:401px;width:16px;height:16px;background:#fff;border:1px solid #a6a6a6;border-radius:2px"></div>
<div class="t" style="left:262.5px;top:403.64px;font-size:12px;line-height:12px;color:#222;transform:scaleX(0.9153);transform-origin:left 50%">ANH1</div>
<div class="t" style="left:424.3px;top:403.64px;font-size:12px;line-height:12px;color:#222;transform:scaleX(0.9121);transform-origin:left 50%">A</div>
<div class="t" style="left:1167.23px;top:403.64px;font-size:12px;line-height:12px;color:#222">0</div>
<div class="t" style="left:1334.76px;top:403.94px;font-size:12px;line-height:12px;color:#1673c0;-webkit-text-stroke:0.35px #1673c0;transform:scaleX(1.0104);transform-origin:right 50%">Lập CT bán hàng</div>
<svg class="abs" style="left:1437px;top:408px" width="8" height="5" viewBox="0 0 8 5"><path d="M0 0 H8 L4 5Z" fill="#1673c0"/></svg>
<div class="abs" style="left:217px;top:449px;width:1248px;height:1px;background:#d4d4d4"></div>
<div class="abs" style="left:226px;top:428px;width:16px;height:16px;background:#fff;border:1px solid #a6a6a6;border-radius:2px"></div>
<div class="t" style="left:262.5px;top:430.64px;font-size:12px;line-height:12px;color:#222;transform:scaleX(0.9310);transform-origin:left 50%">ANH2</div>
<div class="t" style="left:424.3px;top:430.64px;font-size:12px;line-height:12px;color:#222;transform:scaleX(0.9061);transform-origin:left 50%">CÔNG TY TNHH LE THI GARMENT</div>
<div class="t" style="left:748px;top:430.64px;font-size:12px;line-height:12px;color:#222;transform:scaleX(0.9419);transform-origin:left 50%">176 Tân Sơn, Phường An Hội Tây, TP Hồ Chí Minh</div>
<div class="t" style="left:1113.84px;top:430.64px;font-size:12px;line-height:12px;color:#222;transform:scaleX(0.9574);transform-origin:right 50%">25.000.000</div>
<div class="t" style="left:1193.1px;top:430.64px;font-size:12px;line-height:12px;color:#222;transform:scaleX(0.9635);transform-origin:left 50%">0317124727</div>
<div class="t" style="left:1384.14px;top:430.94px;font-size:12px;line-height:12px;color:#1673c0;-webkit-text-stroke:0.35px #1673c0;transform:scaleX(1.0724);transform-origin:right 50%">Thu tiền</div>
<svg class="abs" style="left:1437px;top:434px" width="8" height="5" viewBox="0 0 8 5"><path d="M0 0 H8 L4 5Z" fill="#1673c0"/></svg>
<div class="abs" style="left:217px;top:476px;width:1248px;height:1px;background:#d4d4d4"></div>
<div class="abs" style="left:226px;top:455px;width:16px;height:16px;background:#fff;border:1px solid #a6a6a6;border-radius:2px"></div>
<div class="t" style="left:262.5px;top:457.64px;font-size:12px;line-height:12px;color:#222;transform:scaleX(0.8670);transform-origin:left 50%">DF-SHOPEE</div>
<div class="t" style="left:424.3px;top:457.64px;font-size:12px;line-height:12px;color:#222;transform:scaleX(0.9615);transform-origin:left 50%">Khách lẻ sàn Shopee</div>
<div class="t" style="left:1167.23px;top:457.64px;font-size:12px;line-height:12px;color:#222">0</div>
<div class="t" style="left:1334.76px;top:457.94px;font-size:12px;line-height:12px;color:#1673c0;-webkit-text-stroke:0.35px #1673c0;transform:scaleX(1.0104);transform-origin:right 50%">Lập CT bán hàng</div>
<svg class="abs" style="left:1437px;top:462px" width="8" height="5" viewBox="0 0 8 5"><path d="M0 0 H8 L4 5Z" fill="#1673c0"/></svg>
<div class="abs" style="left:217px;top:503px;width:1248px;height:1px;background:#d4d4d4"></div>
<div class="abs" style="left:226px;top:482px;width:16px;height:16px;background:#fff;border:1px solid #a6a6a6;border-radius:2px"></div>
<div class="t" style="left:262.5px;top:484.64px;font-size:12px;line-height:12px;color:#222;transform:scaleX(0.9554);transform-origin:left 50%">DL - 1129</div>
<div class="t" style="left:424.3px;top:484.64px;font-size:12px;line-height:12px;color:#222;transform:scaleX(0.9519);transform-origin:left 50%">anh Tài</div>
<div class="t" style="left:1167.23px;top:484.64px;font-size:12px;line-height:12px;color:#222">0</div>
<div class="t" style="left:1334.76px;top:484.94px;font-size:12px;line-height:12px;color:#1673c0;-webkit-text-stroke:0.35px #1673c0;transform:scaleX(1.0104);transform-origin:right 50%">Lập CT bán hàng</div>
<svg class="abs" style="left:1437px;top:488px" width="8" height="5" viewBox="0 0 8 5"><path d="M0 0 H8 L4 5Z" fill="#1673c0"/></svg>
<div class="abs" style="left:217px;top:530px;width:1248px;height:1px;background:#d4d4d4"></div>
<div class="abs" style="left:226px;top:509px;width:16px;height:16px;background:#fff;border:1px solid #a6a6a6;border-radius:2px"></div>
<div class="t" style="left:262.5px;top:511.64px;font-size:12px;line-height:12px;color:#222;transform:scaleX(0.8967);transform-origin:left 50%">DLTC</div>
<div class="t" style="left:424.3px;top:511.64px;font-size:12px;line-height:12px;color:#222;transform:scaleX(0.9116);transform-origin:left 50%">CÔNG TY CỔ PHẦN MISA</div>
<div class="t" style="left:748px;top:511.64px;font-size:12px;line-height:12px;color:#222;transform:scaleX(0.9225);transform-origin:left 50%">49 Tô Ký</div>
<div class="t" style="left:1167.23px;top:511.64px;font-size:12px;line-height:12px;color:#222">0</div>
<div class="t" style="left:1193.1px;top:511.64px;font-size:12px;line-height:12px;color:#222;transform:scaleX(0.9635);transform-origin:left 50%">0101243150</div>
<div class="t" style="left:1334.76px;top:511.94px;font-size:12px;line-height:12px;color:#1673c0;-webkit-text-stroke:0.35px #1673c0;transform:scaleX(1.0104);transform-origin:right 50%">Lập CT bán hàng</div>
<svg class="abs" style="left:1437px;top:516px" width="8" height="5" viewBox="0 0 8 5"><path d="M0 0 H8 L4 5Z" fill="#1673c0"/></svg>
<div class="abs" style="left:217px;top:557px;width:1248px;height:1px;background:#d4d4d4"></div>
<div class="abs" style="left:226px;top:536px;width:16px;height:16px;background:#fff;border:1px solid #a6a6a6;border-radius:2px"></div>
<div class="t" style="left:262.5px;top:538.64px;font-size:12px;line-height:12px;color:#222;transform:scaleX(0.9441);transform-origin:left 50%">DTGH000006</div>
<div class="t" style="left:424.3px;top:538.64px;font-size:12px;line-height:12px;color:#222;transform:scaleX(0.9653);transform-origin:left 50%">Đối tác của Shopee</div>
<div class="t" style="left:1167.23px;top:538.64px;font-size:12px;line-height:12px;color:#222">0</div>
<div class="t" style="left:1334.76px;top:538.94px;font-size:12px;line-height:12px;color:#1673c0;-webkit-text-stroke:0.35px #1673c0;transform:scaleX(1.0104);transform-origin:right 50%">Lập CT bán hàng</div>
<svg class="abs" style="left:1437px;top:542px" width="8" height="5" viewBox="0 0 8 5"><path d="M0 0 H8 L4 5Z" fill="#1673c0"/></svg>
<div class="abs" style="left:217px;top:584px;width:1248px;height:1px;background:#d4d4d4"></div>
<div class="abs" style="left:226px;top:563px;width:16px;height:16px;background:#fff;border:1px solid #a6a6a6;border-radius:2px"></div>
<div class="t" style="left:262.5px;top:565.64px;font-size:12px;line-height:12px;color:#222;transform:scaleX(0.9441);transform-origin:left 50%">DTGH000007</div>
<div class="t" style="left:424.3px;top:565.64px;font-size:12px;line-height:12px;color:#222;transform:scaleX(0.9588);transform-origin:left 50%">Đối tác của Lazada</div>
<div class="t" style="left:1167.23px;top:565.64px;font-size:12px;line-height:12px;color:#222">0</div>
<div class="t" style="left:1334.76px;top:565.94px;font-size:12px;line-height:12px;color:#1673c0;-webkit-text-stroke:0.35px #1673c0;transform:scaleX(1.0104);transform-origin:right 50%">Lập CT bán hàng</div>
<svg class="abs" style="left:1437px;top:570px" width="8" height="5" viewBox="0 0 8 5"><path d="M0 0 H8 L4 5Z" fill="#1673c0"/></svg>
<div class="abs" style="left:217px;top:611px;width:1248px;height:1px;background:#d4d4d4"></div>
<div class="abs" style="left:226px;top:590px;width:16px;height:16px;background:#fff;border:1px solid #a6a6a6;border-radius:2px"></div>
<div class="t" style="left:262.5px;top:592.64px;font-size:12px;line-height:12px;color:#222;transform:scaleX(0.9252);transform-origin:left 50%">DTGH000031</div>
<div class="t" style="left:424.3px;top:592.64px;font-size:12px;line-height:12px;color:#222;transform:scaleX(0.9933);transform-origin:left 50%">lalamove</div>
<div class="t" style="left:1167.23px;top:592.64px;font-size:12px;line-height:12px;color:#222">0</div>
<div class="t" style="left:1334.76px;top:592.94px;font-size:12px;line-height:12px;color:#1673c0;-webkit-text-stroke:0.35px #1673c0;transform:scaleX(1.0104);transform-origin:right 50%">Lập CT bán hàng</div>
<svg class="abs" style="left:1437px;top:596px" width="8" height="5" viewBox="0 0 8 5"><path d="M0 0 H8 L4 5Z" fill="#1673c0"/></svg>
<div class="abs" style="left:217px;top:638px;width:1248px;height:1px;background:#d4d4d4"></div>
<div class="abs" style="left:226px;top:617px;width:16px;height:16px;background:#fff;border:1px solid #a6a6a6;border-radius:2px"></div>
<div class="t" style="left:262.5px;top:619.64px;font-size:12px;line-height:12px;color:#222;transform:scaleX(0.9441);transform-origin:left 50%">DTGH000068</div>
<div class="t" style="left:424.3px;top:619.64px;font-size:12px;line-height:12px;color:#222;transform:scaleX(0.9407);transform-origin:left 50%">ANH A</div>
<div class="t" style="left:1167.23px;top:619.64px;font-size:12px;line-height:12px;color:#222">0</div>
<div class="t" style="left:1334.76px;top:619.94px;font-size:12px;line-height:12px;color:#1673c0;-webkit-text-stroke:0.35px #1673c0;transform:scaleX(1.0104);transform-origin:right 50%">Lập CT bán hàng</div>
<svg class="abs" style="left:1437px;top:624px" width="8" height="5" viewBox="0 0 8 5"><path d="M0 0 H8 L4 5Z" fill="#1673c0"/></svg>
<div class="abs" style="left:217px;top:665px;width:1248px;height:1px;background:#d4d4d4"></div>
<div class="abs" style="left:226px;top:644px;width:16px;height:16px;background:#fff;border:1px solid #a6a6a6;border-radius:2px"></div>
<div class="t" style="left:262.5px;top:646.64px;font-size:12px;line-height:12px;color:#222;transform:scaleX(0.9252);transform-origin:left 50%">DTGH000081</div>
<div class="t" style="left:424.3px;top:646.64px;font-size:12px;line-height:12px;color:#222;transform:scaleX(0.9011);transform-origin:left 50%">SPX Express</div>
<div class="t" style="left:1167.23px;top:646.64px;font-size:12px;line-height:12px;color:#222">0</div>
<div class="t" style="left:1334.76px;top:646.94px;font-size:12px;line-height:12px;color:#1673c0;-webkit-text-stroke:0.35px #1673c0;transform:scaleX(1.0104);transform-origin:right 50%">Lập CT bán hàng</div>
<svg class="abs" style="left:1437px;top:650px" width="8" height="5" viewBox="0 0 8 5"><path d="M0 0 H8 L4 5Z" fill="#1673c0"/></svg>
<div class="abs" style="left:217px;top:698px;width:1248px;height:1px;background:#d4d4d4"></div>
<div class="abs" style="left:226px;top:674px;width:16px;height:16px;background:#fff;border:1px solid #a6a6a6;border-radius:2px"></div>
<div class="t" style="left:262.5px;top:676.64px;font-size:12px;line-height:12px;color:#222;transform:scaleX(0.9560);transform-origin:left 50%">KH0000348</div>
<div class="t" style="left:424.3px;top:676.64px;font-size:12px;line-height:12px;color:#222;transform:scaleX(0.9891);transform-origin:left 50%">Cửa hàng thời trang Trung Kiên (demo)</div>
<div class="t" style="left:748px;top:668.94px;font-size:12px;line-height:12px;color:#222;transform:scaleX(0.9723);transform-origin:left 50%">số 78 đường Giải Phóng, Phường Phương Mai, Quận</div>
<div class="t" style="left:748px;top:684.84px;font-size:12px;line-height:12px;color:#222;transform:scaleX(0.9891);transform-origin:left 50%">Đống đa, Thành phố Hà Nội, Việt Nam</div>
<div class="t" style="left:1167.23px;top:676.64px;font-size:12px;line-height:12px;color:#222">0</div>
<div class="t" style="left:1193.1px;top:676.64px;font-size:12px;line-height:12px;color:#222;transform:scaleX(0.9710);transform-origin:left 50%">0104264624</div>
<div class="t" style="left:1334.76px;top:676.94px;font-size:12px;line-height:12px;color:#1673c0;-webkit-text-stroke:0.35px #1673c0;transform:scaleX(1.0104);transform-origin:right 50%">Lập CT bán hàng</div>
<svg class="abs" style="left:1437px;top:680px" width="8" height="5" viewBox="0 0 8 5"><path d="M0 0 H8 L4 5Z" fill="#1673c0"/></svg>
<div class="abs" style="left:217px;top:731px;width:1248px;height:1px;background:#d4d4d4"></div>
<div class="abs" style="left:226px;top:707px;width:16px;height:16px;background:#fff;border:1px solid #a6a6a6;border-radius:2px"></div>
<div class="t" style="left:262.5px;top:709.64px;font-size:12px;line-height:12px;color:#222;transform:scaleX(0.9560);transform-origin:left 50%">KH0000349</div>
<div class="t" style="left:424.3px;top:709.64px;font-size:12px;line-height:12px;color:#222;transform:scaleX(0.9802);transform-origin:left 50%">Cửa hàng thời trang Mẹ và Bé (demo)</div>
<div class="t" style="left:748px;top:701.94px;font-size:12px;line-height:12px;color:#222;transform:scaleX(0.9580);transform-origin:left 50%">175 Tây Sơn, Phường Trung Liệt, Quận Đống Đa,</div>
<div class="t" style="left:748px;top:717.84px;font-size:12px;line-height:12px;color:#222;transform:scaleX(0.9870);transform-origin:left 50%">Thành phố Hà Nội, Việt Nam</div>
<div class="t" style="left:1167.23px;top:709.64px;font-size:12px;line-height:12px;color:#222">0</div>
<div class="t" style="left:1334.76px;top:709.94px;font-size:12px;line-height:12px;color:#1673c0;-webkit-text-stroke:0.35px #1673c0;transform:scaleX(1.0104);transform-origin:right 50%">Lập CT bán hàng</div>
<svg class="abs" style="left:1437px;top:714px" width="8" height="5" viewBox="0 0 8 5"><path d="M0 0 H8 L4 5Z" fill="#1673c0"/></svg>
<div class="abs" style="left:217px;top:764px;width:1248px;height:1px;background:#d4d4d4"></div>
<div class="abs" style="left:226px;top:740px;width:16px;height:16px;background:#fff;border:1px solid #a6a6a6;border-radius:2px"></div>
<div class="t" style="left:262.5px;top:742.64px;font-size:12px;line-height:12px;color:#222;transform:scaleX(0.9241);transform-origin:left 50%">KH0000349_CRM</div>
<div class="t" style="left:424.3px;top:742.64px;font-size:12px;line-height:12px;color:#222;transform:scaleX(0.9802);transform-origin:left 50%">Cửa hàng thời trang Mẹ và Bé (demo)</div>
<div class="t" style="left:748px;top:734.94px;font-size:12px;line-height:12px;color:#222;transform:scaleX(0.9686);transform-origin:left 50%">201B Nguyễn Chí Thanh, Phường 12, Quận 5, Thành</div>
<div class="t" style="left:748px;top:750.84px;font-size:12px;line-height:12px;color:#222;transform:scaleX(0.9880);transform-origin:left 50%">phố Hồ Chí Minh, Việt Nam</div>
<div class="t" style="left:1167.23px;top:742.64px;font-size:12px;line-height:12px;color:#222">0</div>
<div class="t" style="left:1193.1px;top:742.64px;font-size:12px;line-height:12px;color:#222;transform:scaleX(0.9710);transform-origin:left 50%">0301465062</div>
<div class="t" style="left:1334.76px;top:742.94px;font-size:12px;line-height:12px;color:#1673c0;-webkit-text-stroke:0.35px #1673c0;transform:scaleX(1.0104);transform-origin:right 50%">Lập CT bán hàng</div>
<svg class="abs" style="left:1437px;top:746px" width="8" height="5" viewBox="0 0 8 5"><path d="M0 0 H8 L4 5Z" fill="#1673c0"/></svg>
<div class="abs" style="left:217px;top:791px;width:1248px;height:1px;background:#d4d4d4"></div>
<div class="abs" style="left:226px;top:770px;width:16px;height:16px;background:#fff;border:1px solid #a6a6a6;border-radius:2px"></div>
<div class="t" style="left:262.5px;top:772.64px;font-size:12px;line-height:12px;color:#222;transform:scaleX(0.9560);transform-origin:left 50%">KH0000350</div>
<div class="t" style="left:424.3px;top:772.64px;font-size:12px;line-height:12px;color:#222;transform:scaleX(1.0059);transform-origin:left 50%">Nguyễn Minh Quân</div>
<div class="t" style="left:1167.23px;top:772.64px;font-size:12px;line-height:12px;color:#222">0</div>
<div class="t" style="left:1334.76px;top:772.94px;font-size:12px;line-height:12px;color:#1673c0;-webkit-text-stroke:0.35px #1673c0;transform:scaleX(1.0104);transform-origin:right 50%">Lập CT bán hàng</div>
<svg class="abs" style="left:1437px;top:776px" width="8" height="5" viewBox="0 0 8 5"><path d="M0 0 H8 L4 5Z" fill="#1673c0"/></svg>
<div class="abs" style="left:217px;top:818px;width:1248px;height:1px;background:#d4d4d4"></div>
<div class="abs" style="left:226px;top:797px;width:16px;height:16px;background:#fff;border:1px solid #a6a6a6;border-radius:2px"></div>
<div class="t" style="left:262.5px;top:799.64px;font-size:12px;line-height:12px;color:#222;transform:scaleX(0.9387);transform-origin:left 50%">KH0000351</div>
<div class="t" style="left:424.3px;top:799.64px;font-size:12px;line-height:12px;color:#222;transform:scaleX(0.9898);transform-origin:left 50%">Phạm Minh Tuấn</div>
<div class="t" style="left:1143.87px;top:799.64px;font-size:12px;line-height:12px;color:#222;transform:scaleX(0.9391);transform-origin:right 50%">1.620</div>
<div class="t" style="left:1384.14px;top:799.94px;font-size:12px;line-height:12px;color:#1673c0;-webkit-text-stroke:0.35px #1673c0;transform:scaleX(1.0724);transform-origin:right 50%">Thu tiền</div>
<svg class="abs" style="left:1437px;top:804px" width="8" height="5" viewBox="0 0 8 5"><path d="M0 0 H8 L4 5Z" fill="#1673c0"/></svg>
<div class="abs" style="left:252px;top:249px;width:1px;height:569px;background-image:linear-gradient(#7fc2c8 50%,transparent 50%);background-size:1px 2px"></div>
<div class="abs" style="left:414px;top:249px;width:1px;height:569px;background-image:linear-gradient(#7fc2c8 50%,transparent 50%);background-size:1px 2px"></div>
<div class="abs" style="left:738px;top:249px;width:1px;height:569px;background-image:linear-gradient(#7fc2c8 50%,transparent 50%);background-size:1px 2px"></div>
<div class="abs" style="left:1048px;top:249px;width:1px;height:569px;background-image:linear-gradient(#7fc2c8 50%,transparent 50%);background-size:1px 2px"></div>
<div class="abs" style="left:1183px;top:249px;width:1px;height:569px;background-image:linear-gradient(#7fc2c8 50%,transparent 50%);background-size:1px 2px"></div>
<div class="abs" style="left:1309px;top:249px;width:1px;height:569px;background-image:linear-gradient(#7fc2c8 50%,transparent 50%);background-size:1px 2px"></div>
<div class="t" style="left:235.1px;top:833.14px;font-size:12px;line-height:12px;color:#333;transform:scaleX(0.985);transform-origin:left 50%">Tổng số: <b style="color:#111">351</b> bản ghi</div>
<div class="abs" style="left:1084px;top:827px;width:180px;height:23px;border:1px solid #b5bac2;border-radius:2px"></div>
<div class="t" style="left:1094.3px;top:833.02px;font-size:12.5px;line-height:12.5px;color:#222">20 bản ghi trên 1 trang</div>
<svg class="abs" style="left:1249px;top:836px" width="8" height="5" viewBox="0 0 8 5"><path d="M0 0 H8 L4 5Z" fill="#333"/></svg>
<div class="t" style="left:1278.6px;top:832.52px;font-size:12.5px;line-height:12.5px;color:#999;transform:scaleX(0.9019);transform-origin:left 50%">Trước</div>
<div class="abs" style="left:1321px;top:829px;width:20px;height:18px;border:1px solid #ddd"></div>
<div class="t" style="left:1328.3px;top:832.72px;font-size:12.5px;line-height:12.5px;color:#111;font-weight:bold">1</div>
<div class="t" style="left:1346.6px;top:831.72px;font-size:12.5px;line-height:12.5px;color:#222">2</div>
<div class="t" style="left:1365.1px;top:831.72px;font-size:12.5px;line-height:12.5px;color:#222">3</div>
<div class="t" style="left:1383.4px;top:831.92px;font-size:12.5px;line-height:12.5px;color:#222">...</div>
<div class="t" style="left:1404.3px;top:831.72px;font-size:12.5px;line-height:12.5px;color:#222">18</div>
<div class="t" style="left:1434.3px;top:832.52px;font-size:12.5px;line-height:12.5px;color:#222;transform:scaleX(0.8992);transform-origin:left 50%">Sau</div>
<div class="abs" style="left:1466px;top:422px;width:18px;height:60px;background:#2a7ee9;border-radius:4px 0 0 4px;box-shadow:-2px 3px 6px rgba(0,0,0,0.22)"></div>
<svg class="abs" style="left:1471px;top:447px" width="6" height="9" viewBox="0 0 6 9"><path d="M5 1 L1.5 4.5 L5 8" stroke="#fff" stroke-width="1.6" fill="none"/></svg>
<div class="abs" style="left:1099px;top:220px;width:257px;height:131px;background:#fff;border:1px solid #c9cdd3;border-radius:3px;box-shadow:0 3px 6px rgba(0,0,0,0.08)"></div>
<div class="t" style="left:1110.2px;top:230.34px;font-size:12px;line-height:12px;color:#222">Gộp khách hàng tự động</div>
<div class="t" style="left:1110.2px;top:255.24px;font-size:12px;line-height:12px;color:#222;transform:scaleX(0.9746);transform-origin:left 50%">Đồng bộ khách hàng từ AMIS CRM</div>
<div class="t" style="left:1110.2px;top:280.34px;font-size:12px;line-height:12px;color:#222;transform:scaleX(0.9918);transform-origin:left 50%">Cập nhật địa chỉ khách hàng mới nhất</div>
<div class="t" style="left:1110.2px;top:304.84px;font-size:12px;line-height:12px;color:#222;transform:scaleX(0.9925);transform-origin:left 50%">Chuẩn hóa địa chỉ giao hàng bằng AI</div>
<div class="t" style="left:1110.2px;top:330.34px;font-size:12px;line-height:12px;color:#222;transform:scaleX(0.9919);transform-origin:left 50%">Cập nhật mã khách hàng</div>
<div class="abs" style="left:1318px;top:278px;width:28px;height:17px;background:#f47b20;border-radius:3px;color:#fff;font-size:9.5px;font-weight:bold;text-align:center;line-height:17px">Mới</div>
<div class="abs" style="left:1099px;top:321px;width:257px;height:30px;border:3px solid #e04444"></div>
<svg class="abs" style="left:1300px;top:222px" width="40" height="100" viewBox="0 0 40 100"><path d="M34 4 L10 92" stroke="#e04444" stroke-width="1.6"/><path d="M6.5 96.5 L9 86 L13.5 89Z" fill="#e04444"/></svg>
<div class="abs" style="left:0;top:0;width:1484px;height:938px;border:1px solid #b3b3b3;z-index:100"></div>
</body></html>
